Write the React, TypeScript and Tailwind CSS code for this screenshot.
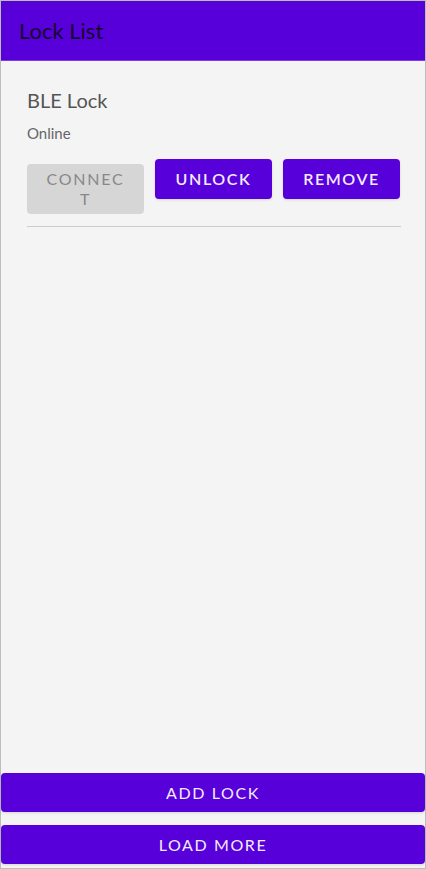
export default function App() {
  const font = { fontFamily: "Lato, 'Open Sans', sans-serif" };
  return (
    <div
      className="w-full h-[869px] flex flex-col bg-[#f4f4f4] border border-[#bdbdbd]"
      style={font}
    >
      {/* app bar */}
      <div className="h-[60px] bg-[#5800da] flex items-center pl-[18px] border-b border-[#7a3ae6]">
        <h1 className="text-[22px] text-[#14002e] leading-none">Lock List</h1>
      </div>

      {/* list */}
      <div className="flex-1 pl-[26px] pr-[24px] pt-[29px]">
        <div className="text-[20px] text-[#555] leading-none">BLE Lock</div>
        <div className="text-[15px] text-[#666] leading-none mt-[16px]">Online</div>
        <div className="flex items-start gap-[11px] mt-[18px]">
          <button className="w-[117px] h-[50px] mt-[5px] rounded bg-[#d6d6d6] text-[#888] text-[16px] tracking-[1.8px] leading-[20px] px-[18px] break-all">
            CONNECT
          </button>
          <button className="w-[117px] h-[40px] rounded bg-[#5800da] text-[#f3ecff] text-[16px] font-semibold tracking-[1.6px] shadow-sm">
            UNLOCK
          </button>
          <button className="w-[117px] h-[40px] rounded bg-[#5800da] text-[#f3ecff] text-[16px] font-semibold tracking-[1.6px] shadow-sm">
            REMOVE
          </button>
        </div>
        <div className="h-px bg-[#cdcdcd] mt-[12px]" />
      </div>

      {/* bottom actions */}
      <div className="flex flex-col gap-[13px] pb-[4px]">
        <button className="h-[39px] w-full rounded bg-[#5800da] text-[#f3ecff] text-[16px] tracking-[1.6px] shadow">
          ADD LOCK
        </button>
        <button className="h-[39px] w-full rounded bg-[#5800da] text-[#f3ecff] text-[16px] tracking-[1.6px] shadow">
          LOAD MORE
        </button>
      </div>
    </div>
  );
}
